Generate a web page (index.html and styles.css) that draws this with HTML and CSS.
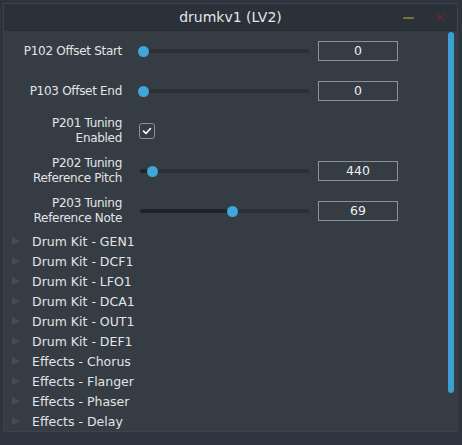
FILE: index.html
```html
<!DOCTYPE html>
<html>
<head>
<meta charset="utf-8">
<link rel="stylesheet" href="styles.css">
</head>
<body>
<div class="window">
  <div class="titlebar">
    <span class="title">drumkv1 (LV2)</span>
    <span class="btn-min"></span>
    <span class="btn-close">×</span>
  </div>
  <div class="content">
    <div class="panel">
      <div class="param">
        <div class="label">P102 Offset Start</div>
        <div class="slider"><div class="fill" style="width:3px"></div><div class="knob" style="left:3px"></div></div>
        <div class="value">0</div>
      </div>
      <div class="param">
        <div class="label">P103 Offset End</div>
        <div class="slider"><div class="fill" style="width:3px"></div><div class="knob" style="left:3px"></div></div>
        <div class="value">0</div>
      </div>
      <div class="param">
        <div class="label">P201 Tuning<br>Enabled</div>
        <div class="check-cell"><span class="checkbox"><svg width="10" height="8" viewBox="0 0 10 8"><path d="M1.5 4.2 L4 6.5 L8.5 1.5" fill="none" stroke="#ffffff" stroke-width="1.6" stroke-linecap="round" stroke-linejoin="round"/></svg></span></div>
        <div></div>
      </div>
      <div class="param">
        <div class="label">P202 Tuning<br>Reference Pitch</div>
        <div class="slider"><div class="fill" style="width:12px"></div><div class="knob" style="left:12px"></div></div>
        <div class="value">440</div>
      </div>
      <div class="param">
        <div class="label">P203 Tuning<br>Reference Note</div>
        <div class="slider"><div class="fill" style="width:92px"></div><div class="knob" style="left:92px"></div></div>
        <div class="value">69</div>
      </div>
      <ul class="tree">
        <li><span class="arrow"></span>Drum Kit - GEN1</li>
        <li><span class="arrow"></span>Drum Kit - DCF1</li>
        <li><span class="arrow"></span>Drum Kit - LFO1</li>
        <li><span class="arrow"></span>Drum Kit - DCA1</li>
        <li><span class="arrow"></span>Drum Kit - OUT1</li>
        <li><span class="arrow"></span>Drum Kit - DEF1</li>
        <li><span class="arrow"></span>Effects - Chorus</li>
        <li><span class="arrow"></span>Effects - Flanger</li>
        <li><span class="arrow"></span>Effects - Phaser</li>
        <li><span class="arrow"></span>Effects - Delay</li>
      </ul>
    </div>
    <div class="scrolltrack"><div class="scrollthumb"></div></div>
  </div>
</div>
</body>
</html>
```

FILE: styles.css
```css
html, body {
  margin: 0;
  padding: 0;
  background: #2e3340;
  width: 462px;
  height: 445px;
  overflow: hidden;
  font-family: "DejaVu Sans", sans-serif;
  color: #e2e5e8;
}

.window {
  margin: 3px 0 0 3px;
  width: 453px;
  height: 427px;
  border: 1px solid #3d434d;
  background: #353c43;
  display: flex;
  flex-direction: column;
}

.titlebar {
  height: 27px;
  background: #2b3138;
  border-bottom: 1px solid #2a2f36;
  position: relative;
  display: flex;
  align-items: center;
  justify-content: center;
}

.title {
  font-size: 14px;
  color: #e4e6e8;
}

.btn-min {
  position: absolute;
  left: 399px;
  top: 13px;
  width: 11px;
  height: 2px;
  background: #7d703c;
  border-radius: 1px;
}

.btn-close {
  position: absolute;
  left: 430px;
  top: 5px;
  font-size: 14px;
  color: #6e2630;
  line-height: 16px;
}

.content {
  flex: 1;
  display: flex;
  background: #353c43;
}

.panel {
  flex: 1;
}

.param {
  height: 40px;
  display: grid;
  grid-template-columns: 118px 170px 80px;
  align-items: center;
}

.label {
  text-align: right;
  font-size: 12px;
  letter-spacing: -0.3px;
  line-height: 15px;
  color: #e2e5e8;
}

.slider {
  position: relative;
  height: 4px;
  margin-left: 18px;
  width: 169px;
  background: #2a3036;
  border-radius: 2px;
}

.fill {
  position: absolute;
  left: 0;
  top: 0;
  height: 4px;
  background: #1f2428;
  border-radius: 2px;
}

.knob {
  position: absolute;
  top: -3.5px;
  width: 11px;
  height: 11px;
  margin-left: -5.5px;
  border-radius: 50%;
  background: #40a6d9;
}

.check-cell {
  padding-left: 17px;
  display: flex;
}

.checkbox {
  width: 14px;
  height: 14px;
  border: 1.5px solid #8c9196;
  border-radius: 3px;
  display: flex;
  align-items: center;
  justify-content: center;
}

.value {
  margin-left: 26px;
  width: 78px;
  height: 18px;
  border: 1px solid #8d9298;
  text-align: center;
  font-size: 12.5px;
  line-height: 18px;
  color: #eceef0;
}

.tree {
  list-style: none;
  margin: 0;
  padding: 0;
}

.tree li {
  height: 20px;
  display: flex;
  align-items: center;
  font-size: 12.5px;
  color: #e2e5e8;
}

.arrow {
  width: 0;
  height: 0;
  border-top: 4.5px solid transparent;
  border-bottom: 4.5px solid transparent;
  border-left: 8px solid #454c54;
  margin-left: 8px;
  margin-right: 12px;
}

.scrolltrack {
  width: 10px;
  padding-top: 1px;
}

.scrollthumb {
  width: 6px;
  height: 361px;
  margin-left: 1px;
  background: #3aa0d2;
  border-radius: 3px;
}
```
